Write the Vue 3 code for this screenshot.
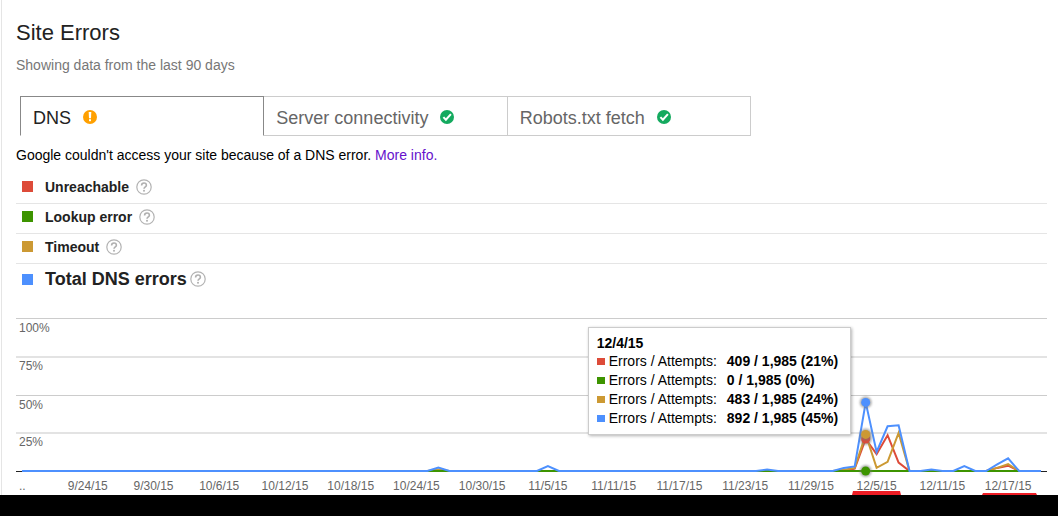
<script setup>
import { ref } from 'vue'

const tabs = [
  { name: 'DNS', status: 'warning' },
  { name: 'Server connectivity', status: 'ok' },
  { name: 'Robots.txt fetch', status: 'ok' },
]
const active = ref(0)

const legend = [
  { name: 'Unreachable', color: 'red' },
  { name: 'Lookup error', color: 'green' },
  { name: 'Timeout', color: 'gold' },
  { name: 'Total DNS errors', color: 'blue', total: true },
]

const attempts = [
  { color: 'red', value: '409 / 1,985 (21%)' },
  { color: 'green', value: '0 / 1,985 (0%)' },
  { color: 'gold', value: '483 / 1,985 (24%)' },
  { color: 'blue', value: '892 / 1,985 (45%)' },
]

// Chart geometry: one point per day, 9/18/15 to 12/20/15
const DAYS = 94
const BASE = 161
const FULL = 152.5
const dayX = (d) => 6 + d * 10.957
const rateY = (p) => BASE - (p / 100) * FULL

const grid = [
  { label: '100%', y: 8.5, major: true },
  { label: '75%', y: 47, major: false },
  { label: '50%', y: 85.5, major: true },
  { label: '25%', y: 123, major: false },
]

const dates = [
  '9/24/15', '9/30/15', '10/6/15', '10/12/15', '10/18/15', '10/24/15', '10/30/15', '11/5/15',
  '11/11/15', '11/17/15', '11/23/15', '11/29/15', '12/5/15', '12/11/15', '12/17/15',
]

// Error rate in percent by day index; days left out are zero
const series = [
  { color: 'red', rates: { 76: 1.5, 77: 21, 78: 11, 79: 23.5, 80: 5.5, 89: 2, 90: 3.5 } },
  { color: 'gold', rates: { 38: 1, 75: 0.8, 76: 2, 77: 24, 78: 2, 79: 6, 80: 25, 89: 2, 90: 4.5 } },
  { color: 'green', rates: {} },
  {
    color: 'blue',
    rates: { 38: 2.3, 48: 3.2, 68: 1, 75: 2, 76: 3, 77: 45, 78: 12.5, 79: 29.3, 80: 30, 83: 1, 86: 3.2, 89: 4.3, 90: 8.3 },
  },
]
const line = (rates) =>
  Array.from({ length: DAYS }, (_, d) => `${dayX(d).toFixed(1)},${rateY(rates[d] || 0).toFixed(1)}`).join(' ')

const markers = [
  { color: 'green', rate: 0 },
  { color: 'red', rate: 21 },
  { color: 'gold', rate: 24 },
  { color: 'blue', rate: 45 },
]
</script>

<template>
  <main class="panel">
    <h1>Site Errors</h1>
    <p class="range">Showing data from the last 90 days</p>

    <div class="tabs" role="tablist">
      <button
        v-for="(tab, i) in tabs"
        :key="tab.name"
        type="button"
        role="tab"
        class="tab"
        :class="{ active: active === i }"
        :aria-selected="active === i"
        @click="active = i"
      >
        {{ tab.name }}
        <svg v-if="tab.status === 'warning'" class="status" viewBox="0 0 14 14" aria-hidden="true">
          <circle cx="7" cy="7" r="7" fill="#ffa000" />
          <path d="M5.7 2h2.6L8 8.200H6z" fill="#fff" />
          <rect x="6" y="9.2" width="2" height="2" fill="#fff" />
        </svg>
        <svg v-else class="status" viewBox="0 0 14 14" aria-hidden="true">
          <circle cx="7" cy="7" r="7" fill="#14aa5f" />
          <path d="M3.4 7.1l2.5 2.6 5-5.5" fill="none" stroke="#fff" stroke-width="2" />
        </svg>
      </button>
    </div>

    <p class="message">
      Google couldn't access your site because of a DNS error. <a href="#">More info</a><span class="stop">.</span>
    </p>

    <ul class="legend">
      <li v-for="item in legend" :key="item.name" :class="{ total: item.total }">
        <span class="swatch" :class="item.color"></span>
        <strong>{{ item.name }}</strong>
        <button type="button" class="help" :aria-label="'Help: ' + item.name">
          <svg viewBox="0 0 16 16" aria-hidden="true">
            <circle cx="8" cy="8" r="7.2" fill="none" stroke="#b3b3b3" stroke-width="1.2" />
            <path
              d="M5.6 6.4C5.6 4.8 6.6 4 8 4s2.4.9 2.4 2.2C10.4 7.8 8 7.8 8 9.8"
              fill="none"
              stroke="#b0b0b0"
              stroke-width="1.6"
            />
            <rect x="7.1" y="10.9" width="1.8" height="1.7" fill="#b0b0b0" />
          </svg>
        </button>
      </li>
    </ul>

    <div class="chart">
      <svg class="plot" viewBox="0 0 1031 185" role="img" aria-label="DNS error rate by day">
        <defs>
          <filter id="glow" x="-50%" y="-50%" width="200%" height="200%">
            <feGaussianBlur stdDeviation="1.2" />
          </filter>
        </defs>
        <g v-for="g in grid" :key="g.label">
          <line x1="0" x2="1031" :y1="g.y" :y2="g.y" :class="g.major ? 'major' : 'minor'" />
          <text class="axis" x="3" :y="g.y + 13">{{ g.label }}</text>
        </g>
        <line class="zero" x1="0" x2="1031" y1="161.5" y2="161.5" />
        <polyline v-for="s in series" :key="s.color" class="series" :class="s.color" :points="line(s.rates)" />
        <g v-for="m in markers" :key="m.color">
          <circle :cx="dayX(77)" :cy="rateY(m.rate)" r="6" class="halo" filter="url(#glow)" />
          <circle :cx="dayX(77)" :cy="rateY(m.rate)" r="4.5" class="dot" :class="m.color" />
        </g>
        <text class="axis" x="3" y="180">..</text>
        <text v-for="(d, i) in dates" :key="d" class="axis date" :x="dayX(6 + i * 6)" y="180">{{ d }}</text>
        <path class="mark" d="M837 181h47l1 4h-49z" />
        <path class="mark" d="M967 183h53l1 2h-55z" />
      </svg>

      <div class="tooltip" role="tooltip">
        <strong class="day">12/4/15</strong>
        <div v-for="a in attempts" :key="a.color" class="entry">
          <span class="chip" :class="a.color"></span>
          <span>Errors / Attempts:</span>
          <strong>{{ a.value }}</strong>
        </div>
      </div>
    </div>
  </main>
</template>

<style>
html {
  background: #000;
}
body {
  margin: 0;
}
</style>

<style scoped>
.panel {
  margin-left: 1px;
  padding: 21px 11px 0 14px;
  border-left: 1px solid #e5e5e5;
  background: #fff;
  color: #222;
  font-family: "Liberation Sans", Arial, sans-serif;
  font-size: 14px;
  box-shadow: -1px 0 #fff;
}
h1 {
  margin: 0;
  font-size: 22px;
  font-weight: 400;
  line-height: 24px;
}
.range {
  margin: 11px 0 0;
  color: #777;
  line-height: 18px;
}
.tabs {
  display: flex;
  width: 70.9%;
  margin: 22px 0 0 4px;
}
.tab {
  flex: 1;
  display: flex;
  align-items: center;
  gap: 12px;
  height: 40px;
  padding: 5px 12px 0;
  border: 1px solid #ccc;
  border-left: 0;
  background: #fff;
  color: #666;
  font: inherit;
  font-size: 18px;
  text-align: left;
  white-space: nowrap;
}
.tab.active {
  border: 1px solid #888;
  border-bottom-color: #fff;
  color: #222;
}
.status {
  width: 14px;
  height: 14px;
  margin-bottom: 4px;
}
.message {
  margin: 10px 0 0;
  color: #000;
  line-height: 18px;
}
.message a {
  color: #61c;
  text-decoration: none;
}
.stop {
  color: #61c;
}
.legend {
  margin: 10px 0 0;
  padding: 0;
  list-style: none;
}
.legend li {
  display: flex;
  align-items: center;
  height: 25px;
  padding-bottom: 4px;
  border-bottom: 1px solid #e5e5e5;
}
.legend li.total {
  height: 30px;
  padding-bottom: 0;
  border-bottom: 0;
  font-size: 18px;
}
.swatch {
  width: 11px;
  height: 11px;
  margin: 0 12px 0 6px;
}
.help {
  display: flex;
  margin-left: 7px;
  padding: 0;
  border: 0;
  background: none;
}
.total .help {
  margin-left: 3px;
}
.help svg {
  width: 16px;
  height: 16px;
}
.swatch.red,
.chip.red {
  background: #dd4b39;
}
.swatch.green,
.chip.green {
  background: #3d9400;
}
.swatch.gold,
.chip.gold {
  background: #cc9933;
}
.swatch.blue,
.chip.blue {
  background: #4d90fe;
}
.chart {
  position: relative;
  margin-top: 16px;
}
.plot {
  display: block;
  width: 100%;
}
.major {
  stroke: #ccc;
}
.minor {
  stroke: #e3e3e3;
  stroke-width: 2;
}
.zero {
  stroke: #222;
}
.axis {
  fill: #666;
  font-size: 12px;
}
.date {
  text-anchor: middle;
}
.series {
  fill: none;
  stroke-width: 2;
}
.series.red {
  stroke: #dd4b39;
}
.series.green {
  stroke: #3d9400;
}
.series.gold {
  stroke: #cc9933;
}
.series.blue {
  stroke: #4d90fe;
}
.halo {
  fill: #777;
  opacity: 0.6;
}
.dot.red {
  fill: #dd4b39;
}
.dot.green {
  fill: #3d9400;
}
.dot.gold {
  fill: #cc9933;
}
.dot.blue {
  fill: #4d90fe;
}
.mark {
  fill: #ed1c24;
}
.tooltip {
  position: absolute;
  top: 9%;
  right: 19%;
  padding: 7px 12px 6px 8px;
  border: 1px solid #ccc;
  background: #fff;
  box-shadow: 1px 1px 3px rgba(0, 0, 0, 0.3);
  color: #000;
  line-height: 19px;
  white-space: nowrap;
}
.day {
  display: block;
  line-height: 17px;
}
.entry {
  display: flex;
  align-items: center;
}
.entry strong {
  margin-left: 10px;
}
.chip {
  width: 8px;
  height: 7px;
  margin-right: 4px;
}
</style>
